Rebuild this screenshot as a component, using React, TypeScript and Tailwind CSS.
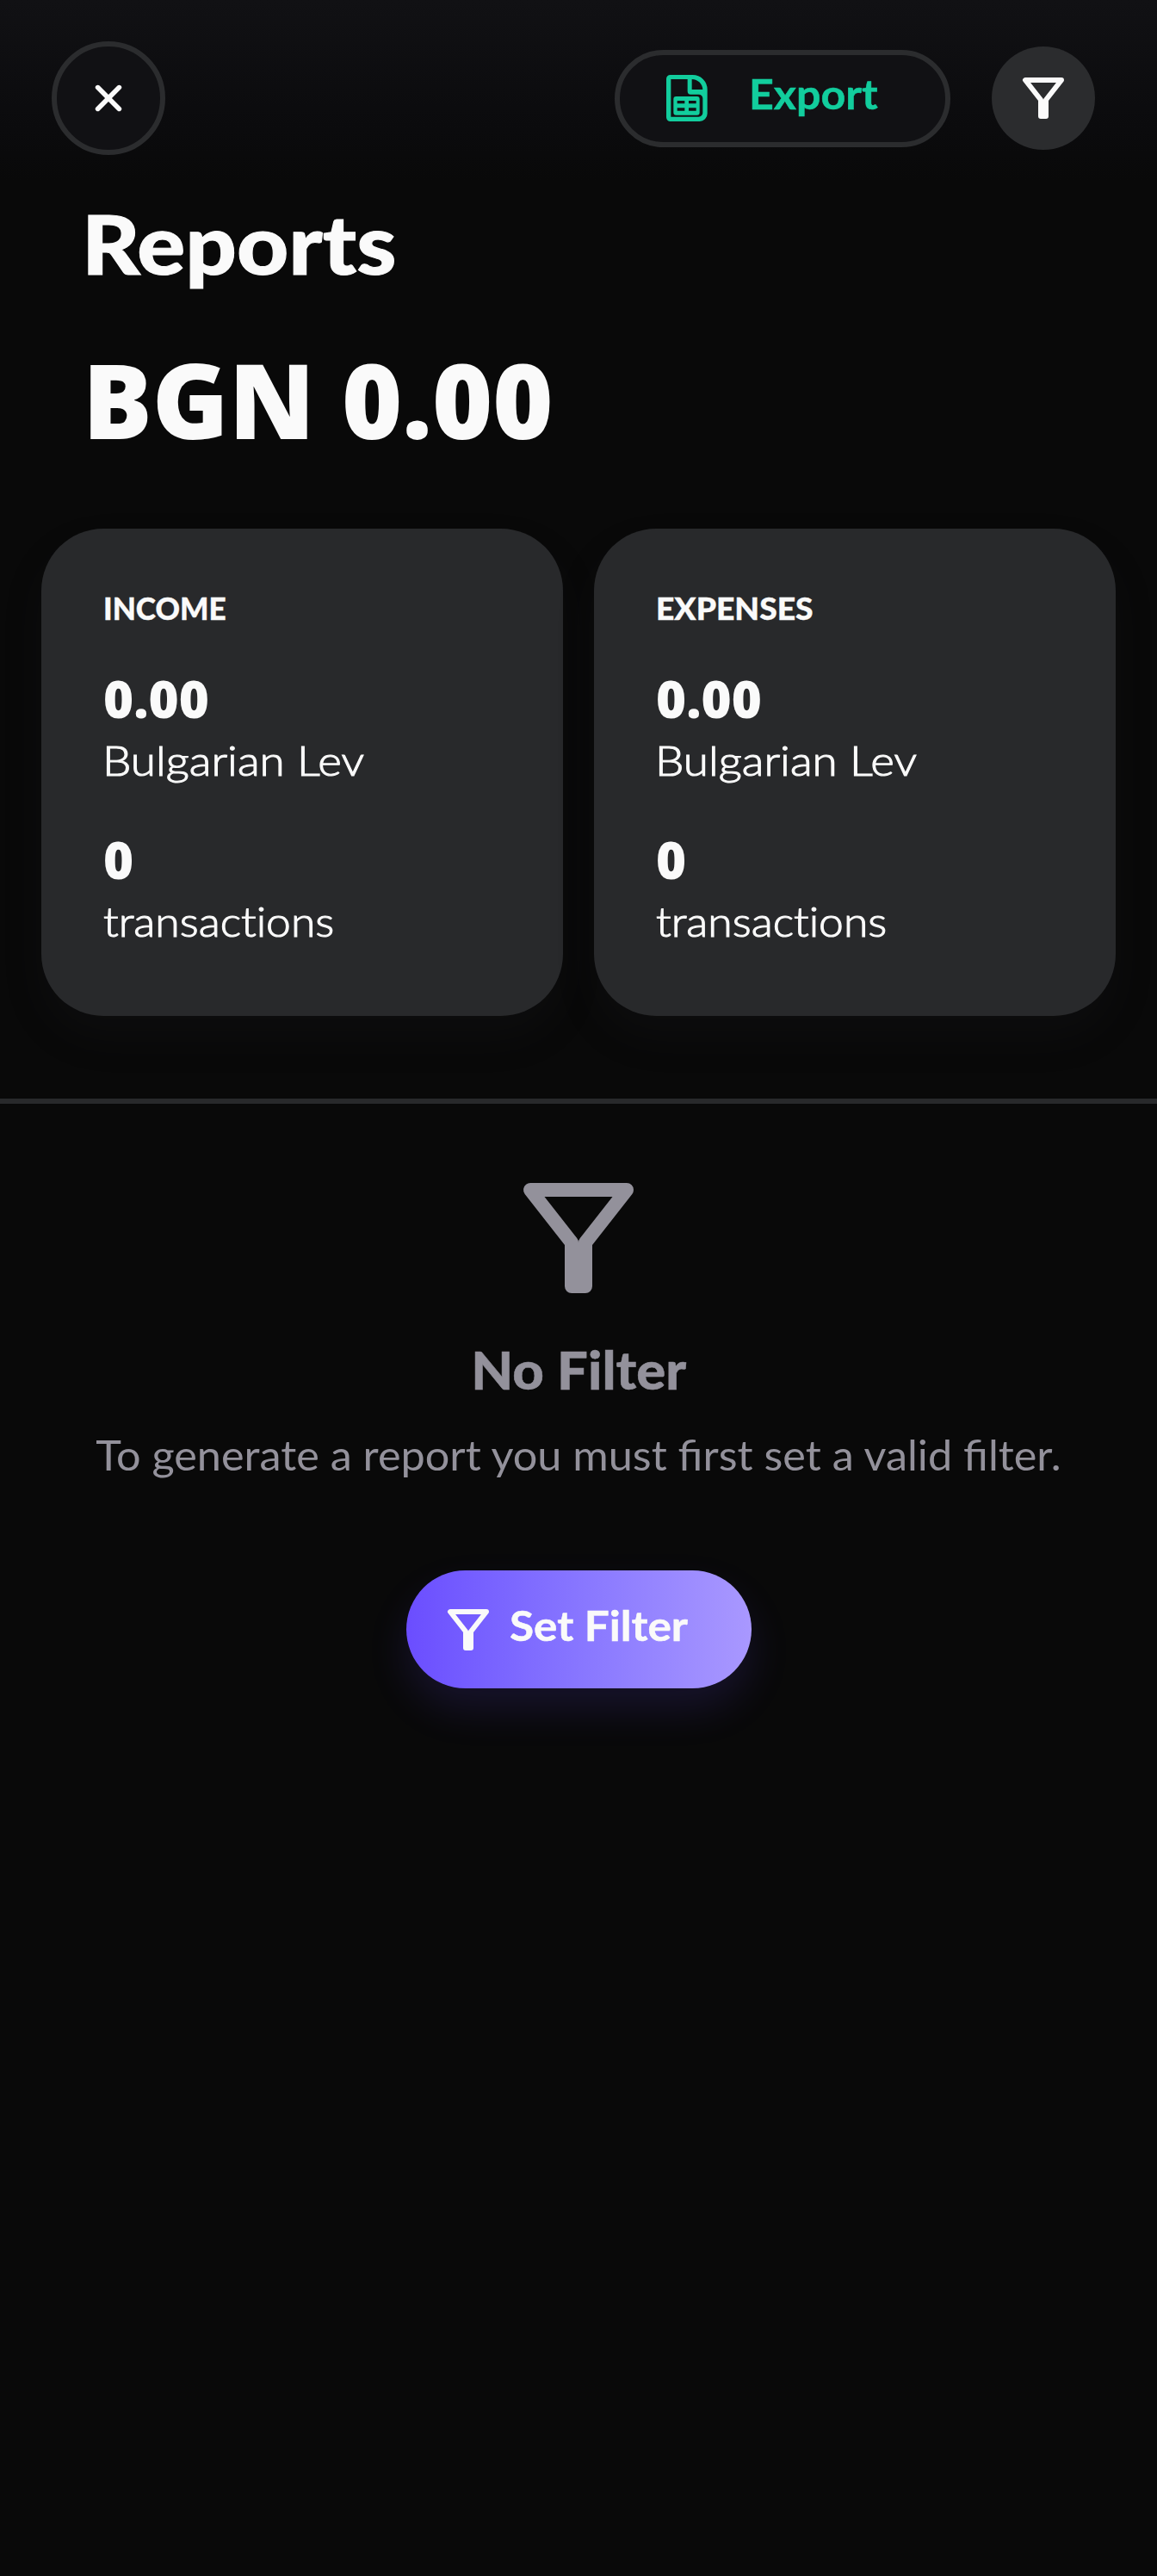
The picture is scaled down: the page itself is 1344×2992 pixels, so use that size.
const FUNNEL = "M5 5H19L13 12.66V19H11V12.66Z";

function Funnel({ className }: { className: string }) {
  return (
    <svg viewBox="0 0 24 24" className={className} fill="none" stroke="currentColor" strokeWidth="2" strokeLinejoin="round">
      <path d={FUNNEL} />
    </svg>
  );
}

function SheetIcon() {
  return (
    <svg viewBox="67 57 216 216" className="size-[72px] shrink-0" fill="currentColor" fillRule="evenodd">
      <path d="M117 84H195A51 51 0 0 1 246 135V219A27 27 0 0 1 219 246H117A14 14 0 0 1 103 232V98A14 14 0 0 1 117 84ZM119 99V230H216A14 14 0 0 0 230 216V166A14 14 0 0 0 216 152H188A11 11 0 0 1 177 141V99ZM192 99V135H230C230 116 213 99 192 99Z" />
      <path d="M137 159H210A9 9 0 0 1 219 168V215A9 9 0 0 1 210 224H137A9 9 0 0 1 128 215V168A9 9 0 0 1 137 159ZM141 174V184H167V174ZM181 174V184H207V174ZM141 199V209H167V199ZM181 199V209H207V199Z" />
    </svg>
  );
}

function Card({ title, titleClass }: { title: string; titleClass: string }) {
  return (
    <section className="h-[566px] flex-1 rounded-[72px] bg-[#28292b] pt-[68px] pl-[72px] shadow-[0_24px_48px_rgba(40,41,50,0.12)]">
      <h2 className="text-[36px] leading-[48px] font-black">
        <span className={titleClass}>{title}</span>
      </h2>
      <p className="mt-[45px] font-['Open_Sans',sans-serif] text-[60px] leading-[72px] font-extrabold">0.00</p>
      <p className="mt-1.5 text-[48px] leading-[60px] font-light">
        <span className="-ml-px inline-block origin-left scale-x-[1.104] [-webkit-text-stroke:1.1px]">Bulgarian Lev</span>
      </p>
      <p className="mt-[49px] font-['Open_Sans',sans-serif] text-[60px] leading-[72px] font-extrabold">0</p>
      <p className="mt-1.5 text-[48px] leading-[60px] font-light">
        <span className="inline-block origin-left scale-x-[1.075] [-webkit-text-stroke:1.1px] [font-variant-ligatures:none]">transactions</span>
      </p>
    </section>
  );
}

export default function App() {
  return (
    <main className="flex min-h-[2992px] w-[1344px] flex-col bg-[#090909] bg-[linear-gradient(180deg,#111114_0px,#0b0b0d_150px,#090909_210px)] font-['Lato',sans-serif] text-[#fafafa]">
      <header className="mt-12 flex h-[132px] items-center pr-[72px] pl-[60px]">
        <button className="grid size-[132px] place-items-center rounded-full border-[6px] border-[#2b2c2e] bg-[#111114]">
          <svg viewBox="0 0 32 32" className="size-8" stroke="currentColor" strokeWidth="5.6" strokeLinecap="round">
            <path d="M3.6 3.6L28.4 28.4M28.4 3.6L3.6 28.4" />
          </svg>
        </button>
        <button className="ml-auto flex h-[113px] w-[390px] items-center gap-9 rounded-full border-[6px] border-[#2b2c2e] bg-[#111114] pl-[42px] text-[#12cd9d]">
          <SheetIcon />
          <span className="origin-left scale-x-[1.045] pb-2.5 text-[48px] leading-[60px] font-bold [-webkit-text-stroke:0.5px]">Export</span>
        </button>
        <button className="ml-12 grid size-[120px] place-items-center rounded-full bg-[#2b2c2e]">
          <Funnel className="size-[72px]" />
        </button>
      </header>
      <h1 className="mt-[42px] pl-[95px] text-[95px] leading-[120px] font-black">
        <span className="inline-block origin-left scale-x-[1.1] [-webkit-text-stroke:1px]">Reports</span>
      </h1>
      <p className="mt-[42px] pl-24 font-['Open_Sans',sans-serif] text-[120px] leading-[160px] font-extrabold">BGN 0.00</p>
      <div className="mt-[70px] flex gap-9 px-12">
        <Card title="INCOME" titleClass="inline-block origin-left scale-x-[0.977] [-webkit-text-stroke:0.4px]" />
        <Card title="EXPENSES" titleClass="inline-block origin-left scale-x-[1.034] [-webkit-text-stroke:0.4px]" />
      </div>
      <div className="mt-24 h-1.5 bg-[#28292b]" />
      <div className="mt-[60px] flex flex-col items-center text-[#93919b]">
        <Funnel className="size-48" />
        <h2 className="mt-[21px] scale-x-[1.057] text-[60px] leading-[72px] font-black [-webkit-text-stroke:0.5px]">No Filter</h2>
        <p className="mt-[33px] scale-x-105 text-[48px] leading-[60px] whitespace-nowrap">To generate a report you must first set a valid filter.</p>
        <button className="mt-[104px] flex h-[137px] w-[401px] items-center gap-3 rounded-full bg-linear-to-r from-[#6b4dff] to-[#a998ff] pl-9 text-[#fafafa] shadow-[0_24px_48px_rgba(107,77,255,0.14)]">
          <Funnel className="size-[72px] shrink-0" />
          <span className="origin-left scale-x-[1.069] pb-2.5 text-[48px] leading-[60px] font-bold [-webkit-text-stroke:0.5px]">Set Filter</span>
        </button>
      </div>
    </main>
  );
}
